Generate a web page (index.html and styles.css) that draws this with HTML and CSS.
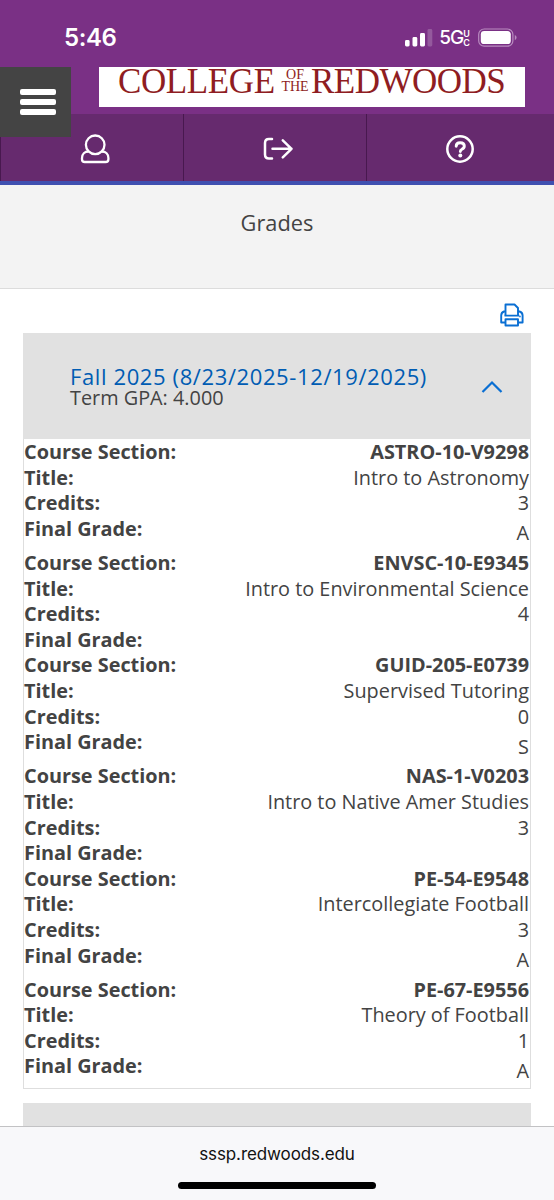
FILE: index.html
```html
<!DOCTYPE html>
<html lang="en">
<head>
    <meta charset="UTF-8">
    <meta name="viewport" content="width=device-width, initial-scale=1.0">
    <title>Grades</title>
    <link rel="stylesheet" href="styles.css">
</head>
<body>
    <div class="status-bar">
        <span class="time">5:46</span>
        <div class="status-icons">
            <svg class="signal" width="28" height="18" viewBox="0 0 28 18" fill="#fff">
                <rect x="0" y="11" width="4.6" height="6.5" rx="1.4"/>
                <rect x="7.5" y="8" width="4.8" height="9.5" rx="1.4"/>
                <rect x="15" y="4" width="5" height="13.5" rx="1.4"/>
                <rect x="22.5" y="0" width="4.8" height="17.5" rx="1.4" opacity="0.2"/>
            </svg>
            <span class="network">5G</span>
            <span class="network-uc"><span>U</span><span>C</span></span>
            <svg class="battery" width="39" height="20" viewBox="0 0 39 20">
                <rect x="0.7" y="1" width="34.2" height="17.2" rx="5.5" fill="none" stroke="#b98cc0" stroke-width="1.2"/>
                <rect x="2.8" y="3.1" width="30" height="13" rx="3.4" fill="#fff"/>
                <path d="M36.8 7v5.2q1.8-.8 1.8-2.6t-1.8-2.6z" fill="#b98cc0"/>
            </svg>
        </div>
    </div>

    <header class="header">
        <button class="menu-btn" aria-label="Menu">
            <span></span><span></span><span></span>
        </button>
        <div class="logo">
            <span class="logo-college">COLLEGE</span>
            <span class="logo-small"><span>OF</span><span>THE</span></span>
            <span class="logo-redwoods">REDWOODS</span>
        </div>
    </header>

    <nav class="nav">
        <a class="nav-item" aria-label="User">
            <svg width="30" height="30" viewBox="0 0 30 30" fill="none" stroke="#fff" stroke-width="2.3">
                <circle cx="15.2" cy="10.8" r="9.3"/>
                <path d="M8.6 17.5C4.7 17.5 2 20 2 24v1.2q0 2.8 2.8 2.8h20.8q2.8 0 2.8-2.800V24c0-4-2.700-6.500-6.600-6.500"/>
            </svg>
        </a>
        <a class="nav-item" aria-label="Sign out">
            <svg width="30" height="30" viewBox="0 0 30 30" fill="none" stroke="#fff" stroke-width="2.5" stroke-linecap="round" stroke-linejoin="round">
                <path d="M9 5H6q-4 0-4 4v11.5q0 4 4 4h3M9.500 14.800H28.500M19.800 6.300l8.700 8.500-8.700 8.500"/>
            </svg>
        </a>
        <a class="nav-item" aria-label="Help">
            <svg width="30" height="30" viewBox="0 0 30 30" fill="none" stroke="#fff">
                <circle cx="15" cy="15" r="12.7" stroke-width="2.5"/>
                <path d="M11.200 12.200Q11.200 8.800 15.200 8.800Q19.300 8.800 19.300 12.100Q19.300 14.200 17 15.200Q15.300 16 15.300 17.500" stroke-width="2.9" stroke-linecap="round"/>
                <circle cx="15.3" cy="21.5" r="2" fill="#fff" stroke="none"/>
            </svg>
        </a>
    </nav>

    <div class="page-title"><h1>Grades</h1></div>

    <main class="content">
        <div class="toolbar">
            <svg width="24" height="24" viewBox="0 0 24 24" fill="none" stroke="#0a6fd3" stroke-width="1.9" stroke-linejoin="round">
                <path d="M5.500 12.500V1.500h9l3.500 3.500v7.500"/>
                <path d="M5.500 8.500H4Q1.200 9.500 1.200 12.500v7h4.300M18 8.500h1.600Q22.600 9.500 22.600 12.500v7H18"/>
                <path d="M4.500 12.600h14.800M5.500 16.200h12.500v6.300H5.500z"/>
                <path d="M19.200 13.500h1.500" stroke-width="1.3"/>
            </svg>
        </div>

        <section class="term">
            <div class="term-header">
                <div>
                    <h2>Fall 2025 (8/23/2025-12/19/2025)</h2>
                    <p>Term GPA: 4.000</p>
                </div>
                <svg class="chevron" width="22" height="14" viewBox="0 0 22 14" fill="none" stroke="#0a6fd3" stroke-width="2.2">
                    <path d="M1.500 12l9.500-9.500 9.500 9.500"/>
                </svg>
            </div>
            <div class="courses">
                <dl class="course">
                    <dt>Course Section:</dt><dd class="section">ASTRO-10-V9298</dd>
                    <dt>Title:</dt><dd>Intro to Astronomy</dd>
                    <dt>Credits:</dt><dd>3</dd>
                    <dt>Final Grade:</dt><dd class="grade">A</dd>
                </dl>
                <dl class="course">
                    <dt>Course Section:</dt><dd class="section">ENVSC-10-E9345</dd>
                    <dt>Title:</dt><dd>Intro to Environmental Science</dd>
                    <dt>Credits:</dt><dd>4</dd>
                    <dt>Final Grade:</dt><dd></dd>
                </dl>
                <dl class="course">
                    <dt>Course Section:</dt><dd class="section">GUID-205-E0739</dd>
                    <dt>Title:</dt><dd>Supervised Tutoring</dd>
                    <dt>Credits:</dt><dd>0</dd>
                    <dt>Final Grade:</dt><dd class="grade">S</dd>
                </dl>
                <dl class="course">
                    <dt>Course Section:</dt><dd class="section">NAS-1-V0203</dd>
                    <dt>Title:</dt><dd>Intro to Native Amer Studies</dd>
                    <dt>Credits:</dt><dd>3</dd>
                    <dt>Final Grade:</dt><dd></dd>
                </dl>
                <dl class="course">
                    <dt>Course Section:</dt><dd class="section">PE-54-E9548</dd>
                    <dt>Title:</dt><dd>Intercollegiate Football</dd>
                    <dt>Credits:</dt><dd>3</dd>
                    <dt>Final Grade:</dt><dd class="grade">A</dd>
                </dl>
                <dl class="course">
                    <dt>Course Section:</dt><dd class="section">PE-67-E9556</dd>
                    <dt>Title:</dt><dd>Theory of Football</dd>
                    <dt>Credits:</dt><dd>1</dd>
                    <dt>Final Grade:</dt><dd class="grade">A</dd>
                </dl>
            </div>
        </section>

        <section class="term next-term"></section>
    </main>

    <footer class="browser-bar">
        <span class="url">sssp.redwoods.edu</span>
        <div class="home-indicator"></div>
    </footer>
</body>
</html>
```
FILE: styles.css
```css
* {
    box-sizing: border-box;
}
body {
    margin: 0;
    height: 1200px;
    overflow: hidden;
    display: flex;
    flex-direction: column;
    background: #fff;
    color: #434343;
    font-family: "Open Sans", "Noto Sans", sans-serif;
    font-size: 19.85px;
}
h1, h2, p, dl, dd {
    margin: 0;
}
.status-bar {
    height: 67px;
    flex-shrink: 0;
    display: flex;
    justify-content: space-between;
    align-items: center;
    padding: 8px 37px 0 64px;
    background: #7a3085;
    color: #fff;
    font-family: Inter, sans-serif;
}
.time {
    font-size: 24px;
    font-weight: 600;
    letter-spacing: -0.4px;
}
.status-icons {
    display: flex;
    align-items: center;
}
.network {
    width: 23px;
    font-size: 19px;
    font-weight: 500;
    line-height: 20px;
    margin-left: 6px;
    letter-spacing: -1.2px;
}
.network-uc {
    display: flex;
    flex-direction: column;
    margin-left: 1px;
    font-size: 9px;
    font-weight: 600;
    line-height: 9px;
}
.battery {
    margin-left: 8px;
}
.header {
    height: 47px;
    flex-shrink: 0;
    display: flex;
    align-items: flex-start;
    background: #7a3085;
}
.menu-btn {
    position: relative;
    z-index: 1;
    width: 71px;
    height: 70px;
    flex-shrink: 0;
    display: flex;
    flex-direction: column;
    gap: 4px;
    padding: 22px 0 0 20px;
    border: none;
    background: #444;
}
.menu-btn span {
    width: 36px;
    height: 6px;
    border-radius: 2px;
    background: #fff;
}
.logo {
    width: 426px;
    height: 40px;
    margin-left: 28px;
    padding-left: 19px;
    display: flex;
    background: #fff;
    color: #8f1d22;
    font-family: "Liberation Serif", serif;
    font-size: 35px;
    line-height: 29px;
    white-space: nowrap;
}
.logo-college {
    width: 161px;
    letter-spacing: -0.4px;
}
.logo-small {
    width: 32px;
    display: flex;
    flex-direction: column;
    align-items: center;
    font-size: 14px;
    line-height: 12px;
    padding-top: 2px;
}
.logo-redwoods {
    letter-spacing: -0.5px;
}
.nav {
    height: 71px;
    flex-shrink: 0;
    display: grid;
    grid-template-columns: 183px 183px 1fr;
    background: #662a6e;
    border-bottom: 4px solid #3f50b0;
}
.nav-item {
    display: flex;
    justify-content: center;
    align-items: center;
    padding: 3px 0 0 6px;
    border-left: 1px solid #48184f;
}
.nav-item:last-child {
    padding: 3px 1px 0 0;
}
.page-title {
    height: 104px;
    flex-shrink: 0;
    padding-top: 23px;
    background: #f3f3f3;
    border-bottom: 1px solid #dcdcdc;
    text-align: center;
}
.page-title h1 {
    font-size: 21.8px;
    font-weight: 400;
    line-height: 30px;
}
.content {
    height: 837px;
    flex-shrink: 0;
    padding: 0 23px;
    overflow: hidden;
}
.toolbar {
    height: 44px;
    display: flex;
    justify-content: flex-end;
    padding: 14px 7px 0 0;
}
.term-header {
    height: 106px;
    display: flex;
    justify-content: space-between;
    padding: 29px 28px 0 47px;
    background: #e1e1e1;
}
.term-header h2 {
    color: #005cb3;
    font-size: 22px;
    font-weight: 500;
    line-height: 28px;
    letter-spacing: 0.61px;
    white-space: nowrap;
}
.term-header p {
    line-height: 27px;
    margin-top: -6px;
}
.chevron {
    margin-top: 18px;
}
.courses {
    height: 650px;
    border: 1px solid #dedede;
    border-top: none;
}
.course {
    display: grid;
    grid-template-columns: auto 1fr;
    grid-auto-rows: 25.62px;
    line-height: 25.62px;
    padding: 0 1px 0 0;
}
.course:has(.grade) {
    grid-template-rows: 25.62px 25.62px 25.62px 34.1px;
}
.course dt, .section {
    font-weight: 700;
}
.course dd {
    text-align: right;
}
.course .grade {
    padding-top: 4.4px;
}
.next-term {
    height: 40px;
    margin-top: 14px;
    background: #e1e1e1;
}
.browser-bar {
    height: 74px;
    flex-shrink: 0;
    display: flex;
    flex-direction: column;
    align-items: center;
    background: #f8f8fa;
    border-top: 1px solid #c2c2c4;
    color: #111;
    font-family: Inter, sans-serif;
}
.url {
    margin-top: 17px;
    font-size: 17px;
    line-height: 20px;
    letter-spacing: -0.1px;
}
.home-indicator {
    width: 198px;
    height: 7px;
    margin-top: 18px;
    border-radius: 4px;
    background: #000;
}
```
